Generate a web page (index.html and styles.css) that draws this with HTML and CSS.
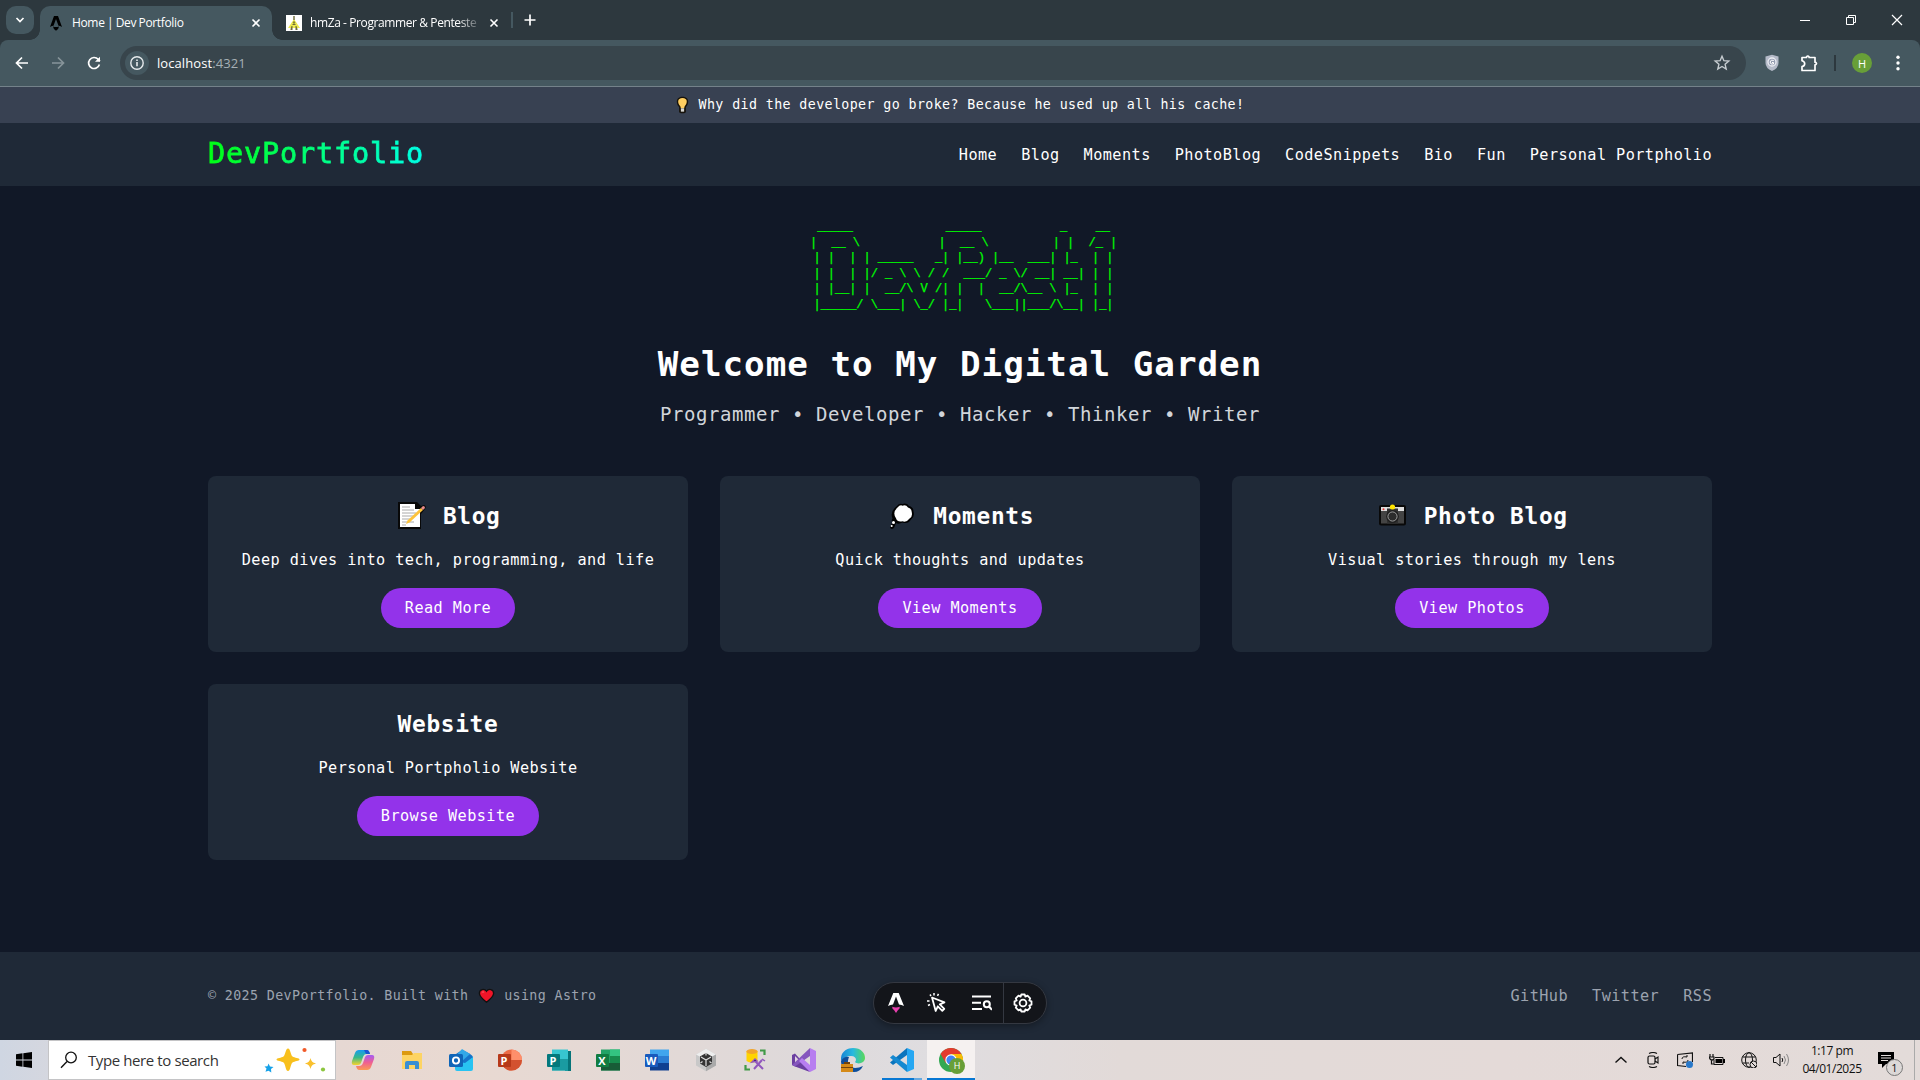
FILE: index.html
```html
<!DOCTYPE html>
<html lang="en">
<head>
<meta charset="utf-8">
<title>Home | Dev Portfolio</title>
<link rel="stylesheet" href="styles.css">
</head>
<body>
<div class="tabstrip">
  <div class="tab-search"><svg width="10" height="10" viewBox="0 0 10 10"><path d="M1.500 3 5 6.500 8.500 3" fill="none" stroke="#fff" stroke-width="1.700"/></svg></div>
  <div class="tab tab-active">
    <svg width="14" height="16" viewBox="0 0 14 16"><path d="M5 1h4l4 11q-2-1.200-3.500-1.300L7 4 4.500 10.700Q3 10.800 1 12z" fill="#000"/><path d="M4 11.500q3 1.200 6 0 0 2-3 4.200-3-2.200-3-4.200z" fill="#000"/></svg>
    <span class="tab-title">Home | Dev Portfolio</span>
    <svg class="x" width="10" height="10" viewBox="0 0 10 10"><path d="m1.500 1.500 7 7m0-7-7 7" stroke="#fff" stroke-width="1.600"/></svg>
  </div>
  <div class="tab tab-second">
    <svg width="16" height="16" viewBox="0 0 16 16"><path fill="#fff" d="M0 0h16v16H0z"/><path d="M8 4 14 13H2z" fill="#ece94f"/><path d="M7.300 1h1.400v4H7.300zM4.500 14l1-3h1v4h-2zm5-3h1l1 3v1h-2zM6.500 9h3v1h-3z" fill="#6d6b3a"/><circle cx="8" cy="7.500" r="1.200" fill="#88862f"/></svg>
    <span class="tab-title fade">hmZa - Programmer &amp; Penteste</span>
    <svg class="x" width="10" height="10" viewBox="0 0 10 10"><path d="m1.500 1.500 7 7m0-7-7 7" stroke="#fff" stroke-width="1.600"/></svg>
  </div>
  <i class="tab-sep"></i>
  <svg class="plus" width="12" height="12" viewBox="0 0 12 12"><path d="M6 .5v11M.5 6h11" stroke="#fff" stroke-width="1.700"/></svg>
  <div class="window-controls">
    <svg width="12" height="12" viewBox="0 0 12 12"><path d="M1 6.500h10" stroke="#fff"/></svg>
    <svg width="12" height="12" viewBox="0 0 12 12"><path d="M1.500 3.500h7v7h-7zM3.500 3.500v-2h7v7h-2" fill="none" stroke="#fff"/></svg>
    <svg width="12" height="12" viewBox="0 0 12 12"><path d="m1 1 10 10m0-10L1 11" stroke="#fff" stroke-width="1.200"/></svg>
  </div>
</div>
<div class="toolbar">
  <svg class="nav-icon" width="16" height="16" viewBox="0 0 16 16"><path d="M14 8H2.500M8 2.500 2.500 8 8 13.500" fill="none" stroke="#fff" stroke-width="1.700"/></svg>
  <svg class="nav-icon" width="16" height="16" viewBox="0 0 16 16"><path d="M2 8h11.500M8 2.500 13.500 8 8 13.500" fill="none" stroke="#87949a" stroke-width="1.700"/></svg>
  <svg class="nav-icon" width="16" height="16" viewBox="0 0 16 16"><path d="M13.400 9.500A5.500 5.500 0 1 1 12.200 4.300L14 6" fill="none" stroke="#fff" stroke-width="1.700"/><path d="M14 1.800v5H9z" fill="#fff"/></svg>
  <div class="omnibox">
    <span class="site-info"><svg width="16" height="16" viewBox="0 0 16 16"><circle cx="8" cy="8" r="6.200" fill="none" stroke="#e6eaec" stroke-width="1.400"/><path d="M8 7v4.200M8 4.500v1.500" stroke="#e6eaec" stroke-width="1.600"/></svg></span>
    <span class="url">localhost<span>:4321</span></span>
    <svg class="star" width="18" height="18" viewBox="0 0 18 18"><path d="m9 2.200 1.900 4.500 4.900.4-3.700 3.200 1.100 4.800L9 12.500l-4.200 2.600 1.100-4.800L2.200 7.100l4.900-.4z" fill="none" stroke="#c6ccd0" stroke-width="1.400"/></svg>
  </div>
  <svg class="shield" width="14" height="18" viewBox="0 0 14 18"><path d="M.5 2.500 7 .7l6.500 1.800v6.500q0 5-6.500 8-6.500-3-6.500-8z" fill="#b4bac8"/><circle cx="7" cy="8" r="4" fill="#969eb2" stroke="#eceef4" stroke-width="1.300"/><path d="M8.800 6.500Q6 5 5 8q.5 3 3.500 2V8.500H7" fill="none" stroke="#fff"/></svg>
  <svg class="puzzle" width="18" height="18" viewBox="0 0 18 18"><path d="M2 3.500h4.500V3q1.300-2 2.600 0v.5H15v4.700h.5q2 1.300 0 2.600H15v5.700H2v-3.800q2.700-.6 2.700-2.900T2 6.800z" fill="none" stroke="#fff" stroke-width="1.700" stroke-linejoin="round"/></svg>
  <i class="tool-sep"></i>
  <span class="avatar">H</span>
  <svg class="dots" width="4" height="16" viewBox="0 0 4 16"><g fill="#fff"><circle cx="2" cy="2.300" r="1.700"/><circle cx="2" cy="8" r="1.700"/><circle cx="2" cy="13.700" r="1.700"/></g></svg>
</div>
<div class="page">
  <div class="banner"><svg class="emoji-s" viewBox="0 0 20 18"><path d="M10 .3c-7.500 0-7 7.500-3.600 10.900v5.300q3.600 2.500 7.200 0v-5.300C17 7.800 17.500.3 10 .3z" fill="#17130c"/><path d="M10 1.600c-5.800 0-5.400 5.600-2.300 8.700l.6 2.200h3.400l.6-2.200c3.100-3.100 3.500-8.700-2.300-8.700z" fill="#ffce60"/><path d="M8.300 12.500h3.400v3.500H8.300z" fill="#d8d8d3"/></svg><span>Why did the developer go broke? Because he used up all his cache!</span></div>
  <header class="site-header">
    <div class="container bar">
      <span class="logo">DevPortfolio</span>
      <nav><a>Home</a><a>Blog</a><a>Moments</a><a>PhotoBlog</a><a>CodeSnippets</a><a>Bio</a><a>Fun</a><a>Personal Portpholio</a></nav>
    </div>
  </header>
  <main class="container">
    <div class="ascii">
<pre> _____             _____           _    __
|  __ \           |  __ \         | |  /_ |</pre>
<pre class="half">| |  | | _____   _| |__) |__  ___| |_  | |
| |  | |/ _ \ \ / /  ___/ _ \/ __| __| | |
| |__| |  __/\ V /| |  |  __/\__ \ |_  | |
|_____/ \___| \_/ |_|   \___||___/\__| |_|</pre>
    </div>
    <h1>Welcome to My Digital Garden</h1>
    <p class="subtitle">Programmer • Developer • Hacker • Thinker • Writer</p>
    <section class="cards">
      <article class="card">
        <h2><svg class="emoji" viewBox="0 0 33 30"><path d="M2 1h19l4 4 3-1q3 1 1 4l-4 5v15H2z" fill="#080808"/><path d="M4 3h15v5h5v18H4z" fill="#fff"/><path d="M6 6h8M6 9h12M6 12h14M6 15h13M6 18h9M6 21h12M6 24h4" stroke="#aaa" stroke-width="1"/><path d="M10 23l1.500-3.500L25 7l2 2-13.500 12.500z" fill="#fdc33b"/><path d="m25 7 2-2q2 0 2 2l-2 2z" fill="#e88b8b"/></svg><span>Blog</span></h2>
        <p>Deep dives into tech, programming, and life</p><a class="btn">Read More</a>
      </article>
      <article class="card">
        <h2><svg class="emoji" viewBox="0 0 33 30"><path d="M11 5q2-3 5.500-2 4-1.500 6.500 2 4.500 1 4.500 5.500 1.500 5.500-2.500 8-3 5-8.500 3-4 2-6.500.5l-2 5q-3 2-4-.5l2.500-5.500q-1.500-1.500 0-3.500-3-7 4.500-12.500z" fill="#000"/><path d="M11.500 6.500q2.500-3 5-1.800 3.500-1.200 5.500 1.800 4 1 3.800 5 1 4.500-2.500 6.300-3 4.200-7 2.500-5 1-6.300-3-4-5.800 1.500-10.800z" fill="#fff"/><circle cx="7.500" cy="21.500" r="1.500" fill="#fff"/><circle cx="5.700" cy="25" r="1" fill="#fff"/></svg><span>Moments</span></h2>
        <p>Quick thoughts and updates</p><a class="btn">View Moments</a>
      </article>
      <article class="card">
        <h2><svg class="emoji" viewBox="0 0 33 30"><rect x="3" y="4" width="27" height="20.500" rx="2" fill="#090909"/><path d="M5 6h23v4H5z" fill="#ddd"/><path d="M5 10h23v12.500H5z" fill="#444"/><path d="M11 7.500h11v15H11z" fill="#303030"/><circle cx="16.500" cy="15.500" r="6.300" fill="#1c1c1c"/><circle cx="16.500" cy="15.500" r="4.600" fill="#2c2c2c" stroke="#bbb" stroke-width=".8"/><circle cx="16.500" cy="6" r="2.600" fill="#ffe600"/><circle cx="7.500" cy="8.300" r="1" fill="#e33"/></svg><span>Photo Blog</span></h2>
        <p>Visual stories through my lens</p><a class="btn">View Photos</a>
      </article>
      <article class="card">
        <h2><span>Website</span></h2>
        <p>Personal Portpholio Website</p><a class="btn">Browse Website</a>
      </article>
    </section>
  </main>
  <footer>
    <div class="container bar">
      <p class="copy"><span>© 2025 DevPortfolio. Built with</span><svg class="emoji-s" viewBox="0 0 20 18"><path d="M10 15.500C5 11.500 2.500 9 2.500 6c0-4.500 5.500-5 7.500-2 2-3 7.500-2.500 7.500 2 0 3-2.500 5.500-7.500 9.500z" fill="#f01428" stroke="#111" stroke-width="1.400"/><path d="M5 5.500q1-1.500 2.500-.5" fill="none" stroke="#ff6670"/></svg><span>using Astro</span></p>
      <div class="links"><a>GitHub</a><a>Twitter</a><a>RSS</a></div>
    </div>
  </footer>
  <div class="dev-toolbar">
    <svg width="16" height="20" viewBox="0 0 16 20"><path d="M5.300 0h5.400L16 13q-2.500-1.200-5-1.500L8 3.500l-3 8Q2.500 11.800 0 13z" fill="#fff"/><path d="M4.200 13.800q3.800 1.500 7.600 0Q12 16 10 17l-2 3-2-3q-2-1-1.800-3.200z" fill="#e83fae"/></svg>
    <svg width="20" height="20" viewBox="0 0 20 20"><path d="m5 4.500 12.500 4.800-4.700 2 4.500 4.500-2 2-4.500-4.500L8.700 18z" fill="none" stroke="#fff" stroke-width="1.800" stroke-linejoin="round"/><path d="M7 0v2.500M11.500.8l-1 2M3 1.500l1 1.500M0 8h2.500M1 12.500l2-1" stroke="#fff" stroke-width="1.500"/></svg>
    <svg width="20" height="16" viewBox="0 0 20 16"><path d="M0 1.500h19M0 7.700h9M0 14h10" stroke="#fff" stroke-width="2"/><circle cx="14.800" cy="9.300" r="3" fill="none" stroke="#fff" stroke-width="2"/><path d="m17 11.500 3 3.300" stroke="#fff" stroke-width="2"/></svg>
    <i></i>
    <svg width="20" height="20" viewBox="0 0 20 20"><path d="M8.300 1.500h3.400l.7 2.100 2.100-.9 2.700 2.700-.9 2.100 2.200.8v3.400l-2.200.8.900 2.100-2.700 2.700-2.100-.9-.7 2.100H8.300l-.7-2.100-2.100.9-2.700-2.700.9-2.100-2.200-.8V8.300l2.200-.8-.9-2.100 2.700-2.700 2.100.9z" fill="none" stroke="#fff" stroke-width="1.800" stroke-linejoin="round"/><circle cx="10" cy="10" r="3.400" fill="none" stroke="#fff" stroke-width="1.800"/></svg>
  </div>
</div>
<div class="taskbar">
  <div class="start"><svg width="16" height="16" viewBox="0 0 16 16"><path d="M0 2.300 6.500 1.300v6.300H0zM7.300 1.200 16 0v7.600H7.300zM0 8.400h6.500v6.300L0 13.700zM7.300 8.400H16V16l-8.700-1.200z"/></svg></div>
  <div class="search">
    <svg width="18" height="18" viewBox="0 0 18 18"><circle cx="11" cy="6.500" r="5.300" fill="none" stroke="#111" stroke-width="1.300"/><path d="M7 10.500 1 16.800" stroke="#111" stroke-width="1.400"/></svg>
    <span>Type here to search</span>
    <svg class="sparks" width="62" height="26" viewBox="0 0 62 26"><path d="M24 1.500c2.500 0 2.500 6.500 4.500 8s7 1.300 7 3-5 1.500-7 3-2 8.500-4.500 8.500-2.500-7-4.500-8.500-7-1.300-7-3 5-1.500 7-3 2-8 4.500-8z" fill="#f8c01d"/><path d="M46.500 11c1 3.500 2 4.500 5.500 5.500-3.500 1-4.500 2-5.500 5.500-1-3.500-2-4.500-5.500-5.500 3.500-1 4.500-2 5.500-5.500z" fill="#f9c02e"/><path d="M4.500 16.500 6 19.500l3.500.5-2.500 2 .3 3.500-2.800-1.700-3 1 1-3.300L.5 19.500l3-.2z" fill="#16a1e8"/><circle cx="40.500" cy="3" r="2.100" fill="#f15a29"/><circle cx="59" cy="22.500" r="2.100" fill="#8cc63f"/></svg>
  </div>
  <div class="apps">
    <div><svg viewBox="0 0 24 24"><defs><linearGradient id="ca" x2="0" y2="1"><stop stop-color="#169bf0"/><stop offset=".5" stop-color="#37b98a"/><stop offset="1" stop-color="#f6d32d"/></linearGradient><linearGradient id="cb" x2="0" y2="1"><stop stop-color="#a45cf4"/><stop offset=".5" stop-color="#ef5f92"/><stop offset="1" stop-color="#fb9a54"/></linearGradient></defs><path d="M8 2h8q2 0 3 4h-4q-2 0-3 3l-2 6q-1 2-3 2H3q-3 0-2-4L4 5q1-3 4-3z" fill="url(#ca)"/><path d="M13 2h3q2 0 3 4h-4z" fill="#1c55d3"/><path d="M16 22H8q-2 0-3-4h4q2 0 3-3l2-6q1-2 3-2h4q3 0 2 4l-3 8q-1 3-4 3z" fill="url(#cb)"/></svg></div>
    <div><svg viewBox="0 0 24 24"><path d="M2 3h9l2 3h9v15H2z" fill="#dc9a10"/><path d="M2 7h10l2-2h8v16H2z" fill="#fdd463"/><path d="M5 21v-6q0-2 2-2h10q2 0 2 2v6h-4v-4H9v4z" fill="#398fd2"/></svg></div>
    <div><svg viewBox="0 0 24 24"><path d="m4 8 9-6q10 4 11 7v9H6z" fill="#1674c9"/><path d="m13 1 8 5-9 8-6-5z" fill="#32a8e8"/><path d="M6 13l10 2 8-6v12q0 2-2 2H8q-2 0-2-2z" fill="#28c3f2"/><rect y="6" width="14" height="13" rx="1.500" fill="#0f65b8"/><circle cx="7" cy="12.500" r="3.100" fill="none" stroke="#fff" stroke-width="1.900"/></svg></div>
    <div class="office"><svg viewBox="0 0 24 24"><circle cx="13.500" cy="12" r="10.500" fill="#ed6c47"/><path d="M13.500 1.500A10.500 10.500 0 0 1 24 12H13.500z" fill="#ff8f6b"/><path d="M24 12a10.500 10.500 0 0 1-21 0z" fill="#d35230"/><rect y="6" width="13" height="13" rx="1" fill="#b7391a"/></svg><b>P</b></div>
    <div class="office"><svg viewBox="0 0 24 24"><path d="M18 3h6v20h-6z" fill="#067479"/><path d="M5 1.500h16v21H5z" fill="#37c6d0"/><path d="M5 11h16v11.500H5z" fill="#1a9ba1"/><rect y="6" width="13" height="13" rx="1" fill="#03787c"/></svg><b>P</b></div>
    <div class="office"><svg viewBox="0 0 24 24"><path d="M5 1.500h19v21H5z" fill="#21a366"/><path d="M14 1.500h10V8H14z" fill="#33c481"/><path d="M5 15h19v7.500H5z" fill="#185c37"/><path d="M14 8h10v7H14z" fill="#178b4d"/><rect y="6" width="13" height="13" rx="1" fill="#107c41"/></svg><b>X</b></div>
    <div class="office"><svg viewBox="0 0 24 24"><path d="M5 1.500h19V8H5z" fill="#41a5ee"/><path d="M5 8h19v7H5z" fill="#2b7cd3"/><path d="M5 15h19v7.500H5z" fill="#103f91"/><rect y="6" width="13" height="13" rx="1" fill="#185abd"/></svg><b>W</b></div>
    <div><svg viewBox="0 0 24 24"><path d="m12 .8 10 5.600v11.200l-10 5.600-10-5.600V6.400z" fill="#c8c8c8"/><path d="m12 .8 10 5.600L12 12 2 6.400z" fill="#eee"/><path d="M12 12v11.200l10-5.600V6.400z" fill="#aaa"/><path d="m12 5 6 3.500v7L12 19l-6-3.500v-7z" fill="#333"/><path d="M12 12v6M12 12 7 9m5 3 5-3" stroke="#ddd" stroke-width="1.200"/><path d="M12 5v2.500M6.500 15l2-1.500m9 1.500-2-1.500" stroke="#ddd" stroke-width="1.200"/></svg></div>
    <div><svg viewBox="0 0 24 24"><path d="M3.500 3v10q5 3 11 0V3z" fill="#ffd400"/><ellipse cx="9" cy="3.500" rx="5.500" ry="2.500" fill="#f1a52c"/><path d="M17 2.500h4.500V7M2.500 17v4.500H7" fill="none" stroke="#419a47" stroke-width="2.200"/><path d="m11 21 8-9m-8 0 9 9" stroke="#9157bd" stroke-width="2"/><path d="m9 14 3-3 2 2zM19 11l3 2" stroke="#9157bd" stroke-width="1.500"/></svg></div>
    <div><svg viewBox="0 0 24 24"><path d="m0 7 3-1.500L15 19l3 5L3 18.500 0 17z" fill="#6b3fa0"/><path d="M3 8v8l4-4z" fill="#e0d3e0"/><path d="M0 17 18 0v8L3 18.500z" fill="#8556bd"/><path d="m18 0 6 3v18l-6 3L7 13l3-3 8 7z" fill="#b77ef0"/></svg></div>
    <div><svg viewBox="0 0 24 24"><defs><linearGradient id="eg"><stop stop-color="#1784d4"/><stop offset=".5" stop-color="#28b9df"/><stop offset="1" stop-color="#59d958"/></linearGradient></defs><path d="M0 13C-1 4 6 0 12 0c8 0 12 5 12 10 0 5-7 7-10 4 2-2 1-6-4-6-4 0-8 2-10 5z" fill="url(#eg)"/><path d="M8 9q-4 10 6 11 4 0 8-2-3 6-9 6C5 24 0 20 0 13q3-5 8-4z" fill="#0e4e9b"/><path d="M0 16h12v8H0z" fill="#d58a18"/><path d="M0 19h12v1H0zM3 14h6v2H3z" fill="#71420d"/></svg></div>
    <div class="open"><svg viewBox="0 0 24 24"><path d="m17 0 7 3v18l-7 3z" fill="#26a7f2"/><path d="m17 0 0 7L3 17 0 14.500z" fill="#0a74bd"/><path d="M17 24v-7L3 7 0 9.500z" fill="#1589d1"/></svg></div>
    <div class="open current"><svg viewBox="0 0 24 24"><circle cx="12" cy="12" r="12" fill="#34a853"/><path d="M1.600 6A12 12 0 0 1 22.400 6H12l-5.200 9z" fill="#e33b2e"/><path d="M22.400 6A12 12 0 0 1 12 24l5.200-9L12 6z" fill="#fbbc05"/><circle cx="12" cy="12" r="5.700" fill="#fff"/><circle cx="12" cy="12" r="4.600" fill="#4285f4"/></svg><span class="profile">H</span></div>
  </div>
  <div class="tray">
    <svg viewBox="0 0 16 16"><path d="m2.500 10.500 5.500-5 5.500 5" fill="none" stroke="#111" stroke-width="1.400"/></svg>
    <svg viewBox="0 0 16 16"><rect x="3" y="4" width="7" height="8" rx="1.500" fill="none" stroke="#111" stroke-width="1.200"/><path d="m10 7 3-2v6l-3-2M4 1.500q4-2 8 0M4 14.500q4 2 8 0" fill="none" stroke="#111" stroke-width="1.100"/></svg>
    <svg viewBox="0 0 16 16"><path d="M.5 2.500 15.500 1v9M9 14.500l-8.500-1v-11" fill="none" stroke="#111" stroke-width="1.200"/><path d="M5 7q0-3 5-2V3m1 5q0 3-5 2v2" fill="none" stroke="#111"/><circle cx="12.500" cy="12.500" r="3.500" fill="#2878ca"/></svg>
    <svg viewBox="0 0 16 16"><path d="M1 2v3m3-3v3M0 5h5v2q-2 2-4 0zM2.500 8v4H5" fill="none" stroke="#111" stroke-width="1.200"/><path d="M6 5.500h8v7H5V8" fill="none" stroke="#111"/><path d="M6.500 7H13v4H6.500zM14 7h2v4h-2z"/></svg>
    <svg viewBox="0 0 16 16"><circle cx="8" cy="8" r="7.300" fill="none" stroke="#111"/><ellipse cx="8" cy="8" rx="3.500" ry="7.300" fill="none" stroke="#111"/><path d="M1.500 5h13M1.500 11H8" stroke="#111"/><circle cx="12.500" cy="12.500" r="3.500" fill="#e2dbd9" stroke="#111"/><path d="m10 10 5 5" stroke="#111"/></svg>
    <svg viewBox="0 0 16 16"><path d="M.5 5.500h2.500l4-3.500v12l-4-3.500H.5z" fill="none" stroke="#111"/><path d="M9 6q1.500 2 0 4" fill="none" stroke="#111"/><path d="M11 4q3 4 0 8m2.500-10q4 6 0 12" fill="none" stroke="#888"/></svg>
    <div class="clock"><span>1:17 pm</span><span>04/01/2025</span></div>
    <div class="notice"><svg width="17" height="17" viewBox="0 0 17 17"><path d="M0 0h16v12H8l-4 4v-4H0z"/><path d="M3 3.500h10M3 6h10M3 8.500h7" stroke="#e2dcdb"/></svg><span>1</span></div>
    <i class="desktop"></i>
  </div>
</div>
</body>
</html>
```
FILE: styles.css
```css
* { box-sizing: border-box; }
body { margin: 0; width: 1920px; height: 1080px; overflow: hidden; display: flex; flex-direction: column; font-family: "Open Sans", "Noto Sans", sans-serif; background: #2d383e; }
svg { display: block; flex: none; }
h1, h2, p, pre { margin: 0; }

/* browser tabs */
.tabstrip { height: 40px; flex: none; display: flex; align-items: center; color: #fff; font-size: 12px; padding-left: 6px; }
.tab-search { width: 28px; height: 28px; border-radius: 10px; background: #455860; display: grid; place-items: center; }
.tab { display: flex; align-items: center; height: 34px; align-self: flex-end; }
.tab-active { width: 232px; margin-left: 6px; padding: 0 11px 0 9px; border-radius: 10px 10px 0 0; background: #455860; position: relative; }
.tab-active::before, .tab-active::after { content: ""; position: absolute; bottom: 0; width: 10px; height: 10px; }
.tab-active::before { left: -10px; background: radial-gradient(circle at 0 0, transparent 9.5px, #455860 10px); }
.tab-active::after { right: -10px; background: radial-gradient(circle at 100% 0, transparent 9.5px, #455860 10px); }
.tab-title { margin-left: 9px; white-space: nowrap; letter-spacing: -.25px; word-spacing: -.9px; position: relative; top: -1px; }
.tab-active .tab-title { letter-spacing: -.35px; word-spacing: -.3px; }
.tab-second { width: 227px; padding-left: 14px; }
.tab-second .tab-title { width: 168px; margin-left: 8px; letter-spacing: -.4px; word-spacing: 0; }
.fade { -webkit-mask-image: linear-gradient(to right, #000 148px, #0003 168px); }
.x { margin-left: auto; }
.tab-second .x { margin-left: 11px; }
.tab-sep { width: 2px; height: 16px; background: #455860; margin-left: 12px; }
.plus { margin-left: 11px; }
.window-controls { margin-left: auto; display: flex; gap: 34px; padding-right: 17px; }

.toolbar { height: 47px; flex: none; display: flex; align-items: center; background: #455860; border-bottom: 1px solid #74828a; border-radius: 8px 8px 0 0; padding-left: 14px; }
.nav-icon { margin-right: 20px; }
.nav-icon + .nav-icon + .nav-icon { margin-right: 18px; }
.omnibox { width: 1626px; height: 34px; border-radius: 17px; background: #38454c; display: flex; align-items: center; padding: 0 15px 0 5px; }
.site-info { width: 24px; height: 24px; border-radius: 50%; background: #455860; display: grid; place-items: center; }
.url { margin-left: 8px; font-size: 13px; letter-spacing: .08px; color: #fff; }
.url span { color: #a6b0b5; }
.star { margin-left: auto; }
.shield { margin-left: 19px; }
.puzzle { margin-left: 21px; }
.tool-sep { width: 2px; height: 16px; margin-left: 16px; background: #2d383e; }
.avatar { width: 20px; height: 20px; margin-left: 16px; border-radius: 50%; background: #689f38; color: #fff; font-size: 11px; display: grid; place-items: center; }
.dots { margin-left: 24px; }

/* site */
.page { flex: 1; display: flex; flex-direction: column; position: relative; background: #111827; color: #fff; font-family: "DejaVu Sans Mono", "Liberation Mono", monospace; font-size: 15.2px; line-height: 24px; }
.page * { letter-spacing: .0295em; }
.container { width: 1504px; margin: 0 auto; }
.bar { display: flex; align-items: center; justify-content: space-between; }
.banner { height: 36px; flex: none; display: flex; align-items: center; justify-content: center; background: #384152; font-size: 13.3px; padding-right: 3px; }
.emoji-s { width: 19px; height: 18px; }
.banner .emoji-s { margin-right: 7px; }
.site-header { height: 63px; flex: none; background: #1f2937; display: flex; }
.logo { font-size: 28.5px; line-height: 36px; margin-bottom: 1px; background: linear-gradient(to right, #00ff14, #00ffe5); -webkit-background-clip: text; background-clip: text; color: transparent; -webkit-text-stroke: .8px transparent; }
nav { display: flex; gap: 24px; }
main { flex: 1; padding-top: 34px; text-align: center; }
.ascii { width: 312px; height: 94px; margin: 0 0 30px 602px; color: #00ff00; text-align: left; }
.ascii pre { font: 12px/15.6px "Liberation Mono", monospace; letter-spacing: -.06px; -webkit-text-stroke: .25px #00ff00; }
.ascii .half { margin-left: 3.5px; }
h1 { font-size: 34.2px; line-height: 40px; font-weight: 700; margin-bottom: 16px; }
.subtitle { font-size: 19px; line-height: 28px; color: #d1d5db; margin-bottom: 48px; }
.cards { display: grid; grid-template-columns: repeat(3, 480px); gap: 32px; }
.card { height: 176px; padding: 24px; border-radius: 8px; background: #1f2937; display: flex; flex-direction: column; align-items: center; gap: 16px; }
.card h2 { display: flex; align-items: center; gap: 14.4px; font-size: 22.8px; line-height: 32px; }
.emoji { width: 33px; height: 30px; }
.btn { height: 40px; line-height: 40px; padding: 0 24px; border-radius: 20px; background: #9333ea; }
footer { height: 88px; flex: none; display: flex; background: #1f2937; color: #9ca3af; }
.copy { display: flex; align-items: center; gap: 8.4px; font-size: 13.3px; }
.links { display: flex; gap: 24px; }

.dev-toolbar { position: absolute; left: 873px; bottom: 16px; width: 174px; height: 42px; border: 1px solid #343841; border-radius: 21px; background: #13151a; display: flex; align-items: center; padding: 0 13px 0 14px; box-shadow: 0 2px 7px #0005; }
.dev-toolbar svg:nth-child(2) { margin-left: 23px; }
.dev-toolbar svg:nth-child(3) { margin-left: 25px; }
.dev-toolbar i { width: 1px; height: 40px; margin-left: 11px; background: #343841; }
.dev-toolbar svg:last-child { margin-left: auto; }

/* desktop taskbar */
.taskbar { height: 40px; flex: none; display: flex; background: linear-gradient(to right, #cfd6e2 0, #d5d7df 50px, #e6d8d3 340px, #e9d9d1 460px, #ded9da 800px, #dfdde0 930px, #e2dad8 1120px, #e4dad8 1500px, #e3dbd9 1920px); color: #111; }
.start { width: 48px; display: grid; place-items: center; }
.search { width: 288px; background: #fff; border: 1px solid #c4c4c6; display: flex; align-items: center; padding: 0 9px 0 11px; font-size: 15px; margin-right: 2px; }
.search span { margin-left: 10px; letter-spacing: -.4px; color: #333; }
.sparks { margin-left: auto; }
.apps { display: flex; }
.apps > div { width: 49px; display: grid; place-items: center; position: relative; }
.apps svg { width: 24px; height: 24px; }
.office b { position: absolute; left: 12.5px; top: 14px; width: 13px; color: #fff; font: bold 11px/13px "Open Sans", sans-serif; text-align: center; }
.apps .open::after { content: ""; position: absolute; left: 5px; bottom: 0; width: 40px; height: 2px; background: linear-gradient(to right, #0878d3 32px, #66a9e0 32px); }
.apps > .current { width: 48px; margin-left: 1px; background: #f5f1f0; }
.apps .current::after { left: 0; width: 48px; background: #0878d3; }
.profile { position: absolute; left: 22px; top: 18px; width: 16px; height: 16px; border-radius: 50%; background: #689f38; color: #fff; font-size: 9px; line-height: 16px; text-align: center; }
.tray { margin-left: auto; display: flex; align-items: center; }
.tray > svg { width: 16px; height: 16px; margin-right: 16px; }
.clock { width: 60px; margin-left: -3px; display: flex; flex-direction: column; align-items: center; font-size: 12px; line-height: 18px; letter-spacing: -.45px; }
.notice { width: 26px; margin-left: 16px; height: 17px; position: relative; }
.notice span { position: absolute; left: 8px; top: 7px; width: 17px; height: 17px; border: 1px solid #777; border-radius: 50%; background: #dcd8d7; font-size: 11px; line-height: 15px; text-align: center; }
.desktop { width: 6px; height: 40px; margin-left: 10px; border-left: 1px solid #aaa; }
```
